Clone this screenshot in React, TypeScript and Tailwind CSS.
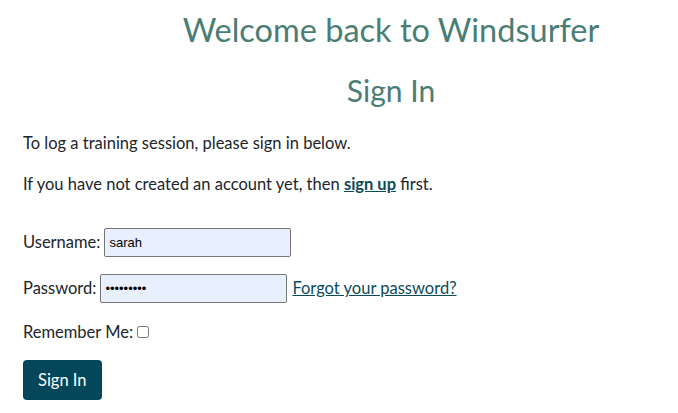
export default function App() {
  return (
    <div className="w-[678px] h-[413px] overflow-hidden bg-white font-['Lato',sans-serif] text-[16.5px] text-[#212529]">
      <div className="ml-[23px] w-[736px]">
        <h1 className="text-center text-[32.5px] leading-[44px] text-[#4a7d74] pt-[8px]">
          Welcome back to Windsurfer
        </h1>
        <h2 className="text-center text-[30px] leading-[34px] text-[#4a7d74] mt-[21px]">
          Sign In
        </h2>
        <p className="mt-[24px] leading-[24px]">
          To log a training session, please sign in below.
        </p>
        <p className="mt-[17px] leading-[24px]">
          If you have not created an account yet, then{" "}
          <a href="#" className="font-bold underline text-[#0b4b5a]">
            sign up
          </a>{" "}
          first.
        </p>
        <form className="mt-[31px]">
          <div className="flex items-center h-[30px]">
            <label>Username:</label>
            <input
              defaultValue="sarah"
              className="box-border ml-[4px] w-[187px] h-[29px] shrink-0 border border-[#767676] rounded-[2px] bg-[#e8f0fe] px-[4px] text-[13px] font-['Liberation_Sans',sans-serif] text-black"
            />
          </div>
          <div className="flex items-center h-[30px] mt-[16px]">
            <label>Password:</label>
            <input
              type="password"
              defaultValue="password1"
              className="box-border ml-[4px] w-[187px] h-[29px] shrink-0 border border-[#767676] rounded-[2px] bg-[#e8f0fe] px-[4px] text-[13px] font-['Liberation_Sans',sans-serif] text-black"
            />
            <a href="#" className="ml-[5px] underline text-[#0b4b5a]">
              Forgot your password?
            </a>
          </div>
          <div className="flex items-center h-[24px] mt-[17px]">
            <label>Remember Me:</label>
            <input type="checkbox" className="ml-[4px] w-[12px] h-[12px]" />
          </div>
          <button
            type="button"
            className="mt-[16px] h-[40px] px-[15px] rounded-[4px] bg-[#04475a] text-white"
          >
            Sign In
          </button>
        </form>
      </div>
    </div>
  );
}
